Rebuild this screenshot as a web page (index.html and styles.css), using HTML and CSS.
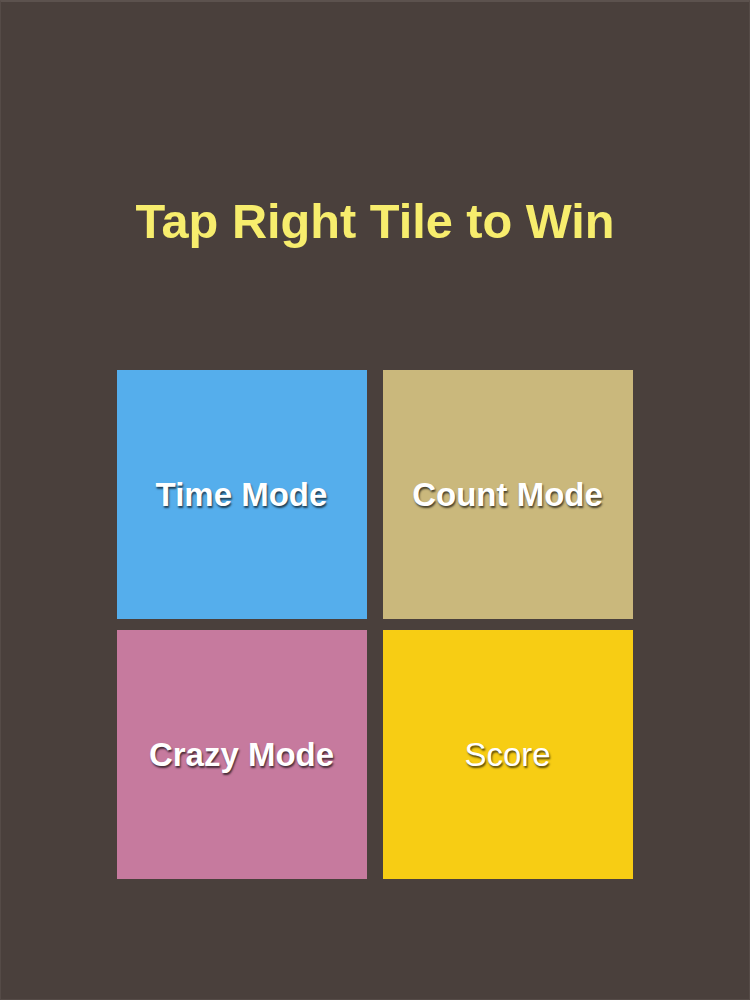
FILE: index.html
```html
<!DOCTYPE html>
<html>
<head>
<link rel="stylesheet" href="styles.css">
</head>
<body>

<div class="screen">
	<h1 class="title">Tap Right Tile to Win</h1>

	<div class="tiles">
		<div class="tile tileTime"><span>Time Mode</span></div>
		<div class="tile tileCount"><span>Count Mode</span></div>
		<div class="tile tileCrazy"><span>Crazy Mode</span></div>
		<div class="tile tileScore"><span>Score</span></div>
	</div>
</div>

</body>
</html>
```

FILE: styles.css
```css
html, body {
	margin: 0;
	padding: 0;
}

body {
	font-family: "Liberation Sans", Arial, sans-serif;
	background-color: #4a403c;
}

.screen {
	box-sizing: border-box;
	width: 750px;
	height: 1000px;
	border: 1px solid #554b47;
	border-top: 2px solid #5c524e;
	padding-top: 195px;
}

.title {
	margin: 0;
	text-align: center;
	font-size: 48.7px;
	line-height: 48px;
	font-weight: bold;
	color: #f7ed6d;
}

.tiles {
	display: grid;
	grid-template-columns: 250px 250px;
	grid-template-rows: 249px 249px;
	column-gap: 16px;
	row-gap: 11px;
	justify-content: center;
	margin-top: 125px;
	margin-left: -1px;
}

.tile {
	display: flex;
	align-items: center;
	justify-content: center;
	color: #ffffff;
	font-size: 33px;
	font-weight: bold;
	text-shadow: 1px 2px 2px rgba(0, 0, 0, 0.65);
}

.tileTime  { background-color: #55aeec; }
.tileCount { background-color: #cab87c; }
.tileCrazy { background-color: #c67a9e; }

.tileScore {
	background-color: #f7cd14;
	font-weight: normal;
}
```
